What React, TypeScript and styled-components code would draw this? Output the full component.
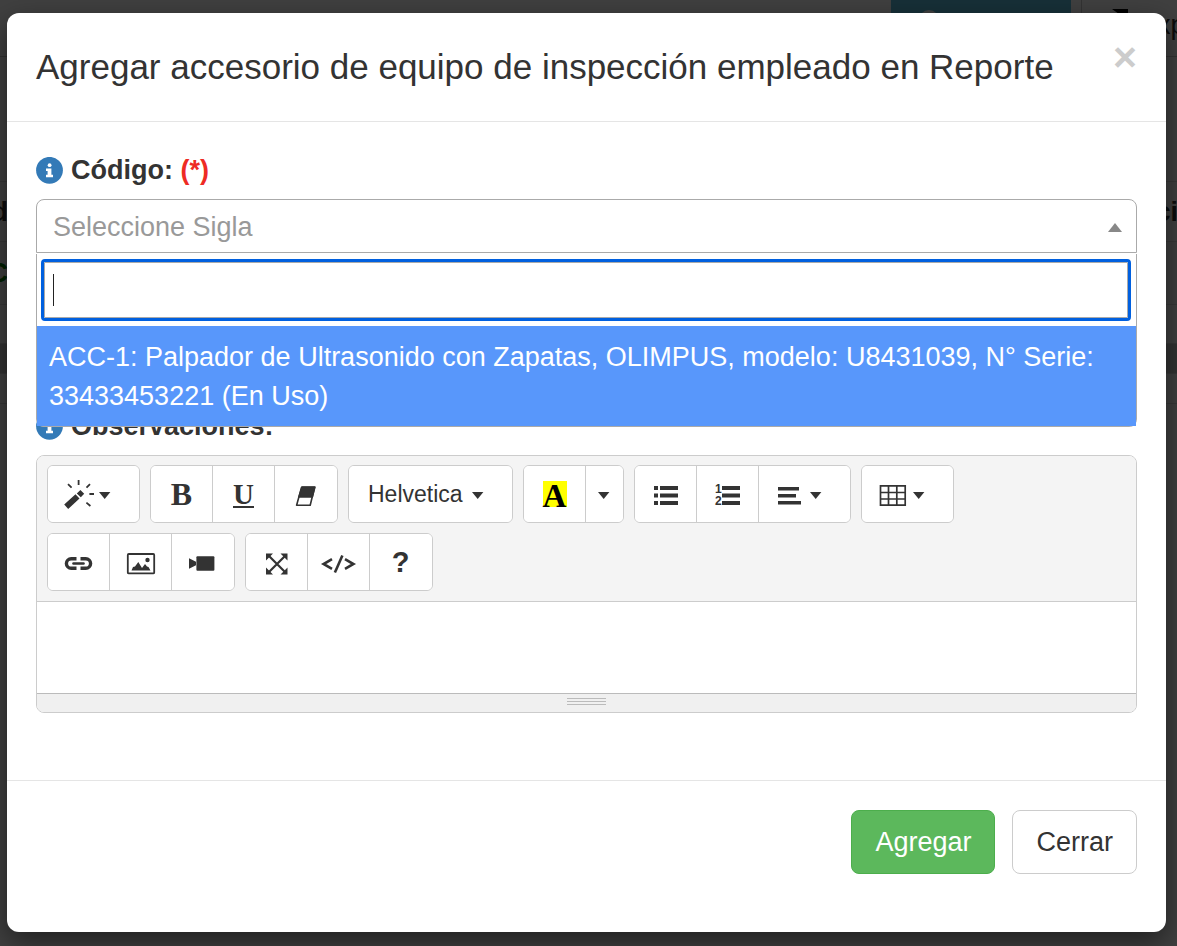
import React from "react";
import styled, { createGlobalStyle } from "styled-components";

const GlobalStyle = createGlobalStyle`
  * { box-sizing: border-box; }
  body {
    margin: 0;
    color: #333;
    font: 27px/38px "Liberation Sans", Arial, sans-serif;
  }
  button, input, textarea { font: inherit; color: inherit; }
`;

/* Page behind the dialog */

const Page = styled.div`
  position: relative;
  min-height: 100vh;
  overflow: hidden;
  background: #fff;
`;

const Behind = styled.div`
  position: absolute;
  inset: 0;
  overflow: hidden;
`;

const PageBar = styled.div`
  display: flex;
  justify-content: flex-end;
  height: 57px;
  border-bottom: 1px solid #ccc;
`;

const TealBlock = styled.div`
  width: 180px;
  margin-right: 10px;
  padding: 10px 28px;
  background: #5bc0de;
`;

const TealDot = styled.span`
  display: block;
  width: 20px;
  height: 20px;
  border-radius: 50%;
  background: #fff;
`;

const ExportBlock = styled.div`
  display: flex;
  align-items: center;
  gap: 10px;
  width: 96px;
  padding: 0 0 6px 30px;
  border-left: 1px solid #ccc;
  color: #333;
  white-space: nowrap;
  svg { flex: none; }
`;

const PageRow = styled.div<{ $height: number; $shade?: string }>`
  display: flex;
  align-items: center;
  justify-content: space-between;
  height: ${(p) => p.$height}px;
  border-bottom: 1px solid #ddd;
  background: ${(p) => p.$shade || "#fff"};
  font-weight: bold;
`;

const EdgeStart = styled.span<{ $color?: string }>`
  display: flex;
  justify-content: flex-end;
  width: 8px;
  color: ${(p) => p.$color || "#333"};
`;

const EdgeEnd = styled.span`
  width: 56px;
  overflow: hidden;
`;

/* Dialog */

const Backdrop = styled.div`
  position: relative;
  min-height: 100vh;
  padding: 13px 11px 14px 7px;
  background: rgba(0, 0, 0, 0.75);
`;

const Dialog = styled.section`
  background: #fff;
  border-radius: 12px;
  box-shadow: 0 10px 29px rgba(0, 0, 0, 0.5);
`;

const Header = styled.header`
  display: flex;
  justify-content: space-between;
  align-items: flex-start;
  padding: 29px;
  border-bottom: 1px solid #e5e5e5;
`;

const Title = styled.h4`
  margin: 0;
  font-size: 35px;
  line-height: 50px;
  font-weight: normal;
`;

const Close = styled.button`
  padding: 0;
  border: 0;
  background: none;
  color: #ccc;
  font-size: 41px;
  line-height: 30px;
  font-weight: bold;
`;

const Body = styled.div`
  padding: 29px;
`;

const Field = styled.div<{ $gap: number }>`
  margin-bottom: ${(p) => p.$gap}px;
`;

const Label = styled.label`
  display: flex;
  align-items: center;
  gap: 8px;
  margin-bottom: 10px;
  font-weight: bold;
`;

const Required = styled.span`
  color: #ee2b24;
`;

const Picker = styled.div`
  position: relative;
`;

const Selection = styled.button`
  display: flex;
  align-items: center;
  justify-content: space-between;
  width: 100%;
  height: 54px;
  padding: 2px 14px 0 16px;
  border: 1px solid #aaa;
  border-radius: 8px 8px 0 0;
  background: #fff;
  color: #999;
`;

const Dropdown = styled.div`
  position: absolute;
  z-index: 1;
  top: 100%;
  left: 0;
  right: 0;
  margin-top: 1px;
  border: 1px solid #aaa;
  border-top: 0;
  border-radius: 0 0 8px 8px;
  background: #fff;
`;

const SearchArea = styled.div`
  padding: 8px 8px 8px 7px;
`;

const SearchBox = styled.div`
  display: flex;
  align-items: center;
  height: 56px;
  padding: 0 8px;
  border: 1px solid #aaa;
  outline: 3px solid #0060df;
  border-radius: 1px;
`;

const TextCursor = styled.span`
  width: 1px;
  height: 32px;
  background: #222;
`;

const SearchInput = styled.input`
  flex: 1;
  min-width: 0;
  padding: 0;
  border: 0;
  outline: 0;
  background: none;
`;

const Options = styled.ul`
  margin: 0;
  padding: 0;
  list-style: none;
`;

const Option = styled.li`
  padding: 12px 12px 10px;
  background: #5897fb;
  color: #fff;
  line-height: 39px;
`;

/* Editor */

const Editor = styled.div`
  overflow: hidden;
  border: 1px solid #ccc;
  border-radius: 8px;
`;

const Toolbar = styled.div`
  display: flex;
  flex-wrap: wrap;
  gap: 10px;
  padding: 9px 10px 10px;
  border-bottom: 1px solid #ccc;
  background: #f4f4f4;
`;

const Group = styled.div`
  display: flex;
  height: 58px;
  overflow: hidden;
  border: 1px solid #ccc;
  border-radius: 6px;
  background: #fff;
`;

const kinds = {
  icon: { width: 62, start: 15 },
  menu: { width: 91, start: 16 },
  font: { width: 163, start: 19 },
  caret: { width: 37, start: 12 },
};

const Tool = styled.button<{ $kind?: keyof typeof kinds }>`
  display: flex;
  align-items: center;
  gap: ${(p) => (p.$kind === "font" ? 9 : 4)}px;
  width: ${(p) => kinds[p.$kind || "icon"].width}px;
  padding: 0 0 0 ${(p) => kinds[p.$kind || "icon"].start}px;
  border: 0;
  border-right: 1px solid #ccc;
  background: #fff;
  font-size: 23px;
  &:last-child { border-right: 0; }
`;

const Glyph = styled.span<{ $size: number; $sans?: boolean }>`
  width: 31px;
  text-align: center;
  font-family: ${(p) => (p.$sans ? '"Liberation Sans", sans-serif' : '"Liberation Serif", serif')};
  font-size: ${(p) => p.$size}px;
  line-height: 32px;
  font-weight: bold;
`;

const Underlined = styled.span`
  display: inline-block;
  height: 26px;
  border-bottom: 2px solid #333;
  line-height: 24px;
`;

const Marker = styled.span`
  display: block;
  width: 24px;
  height: 26px;
  margin: 0 auto;
  background: #ff0;
  color: #000;
  line-height: 30px;
`;

const EditArea = styled.textarea`
  display: block;
  width: 100%;
  height: 91px;
  padding: 10px;
  border: 0;
  outline: 0;
  resize: none;
`;

const StatusBar = styled.div`
  display: flex;
  flex-direction: column;
  align-items: center;
  gap: 2px;
  height: 19px;
  padding-top: 4px;
  border-top: 1px solid #bbb;
  background: #f0f0f0;
`;

const GripLine = styled.span`
  width: 39px;
  height: 1px;
  background: #bbb;
`;

const Footer = styled.footer`
  display: flex;
  justify-content: flex-end;
  gap: 17px;
  padding: 29px 29px 58px;
  border-top: 1px solid #e5e5e5;
`;

const Button = styled.button<{ $primary?: boolean }>`
  height: 64px;
  padding: 0 23px;
  border: 1px solid ${(p) => (p.$primary ? "#4cae4c" : "#ccc")};
  border-radius: 8px;
  background: ${(p) => (p.$primary ? "#5cb85c" : "#fff")};
  color: ${(p) => (p.$primary ? "#fff" : "#333")};
`;

const IconSvg = styled.svg`
  flex: none;
  overflow: visible;
  fill: #333;
`;

const Icon = ({ children }: { children: React.ReactNode }) => (
  <IconSvg width="31" height="30" viewBox="0 0 31 30" aria-hidden="true">
    {children}
  </IconSvg>
);

const Caret = () => (
  <IconSvg width="12" height="12" viewBox="0 0 12 12" aria-hidden="true">
    <path d="M0 4H11.4L5.7 11Z" />
  </IconSvg>
);

const Info = () => (
  <svg width="27" height="27" viewBox="0 0 27 27" aria-hidden="true">
    <circle cx="13.5" cy="13.3" r="13.4" fill="#337ab7" />
    <circle cx="13.6" cy="8.2" r="1.9" fill="#fff" />
    <path d="M10 11.6H15.4V17.8H17V20.2H10V17.8H11.6V14H10Z" fill="#fff" />
  </svg>
);

export default function App() {
  return (
    <Page>
      <GlobalStyle />
      <Behind aria-hidden="true">
        <PageBar>
          <TealBlock><TealDot /></TealBlock>
          <ExportBlock>
            <svg width="17" height="32" viewBox="0 0 17 32">
              <path d="M0 0H16V14L11 9L4 16L0 12L7 5Z" fill="#000" />
            </svg>
            Exportar
          </ExportBlock>
        </PageBar>
        <PageRow $height={125} />
        <PageRow $height={60}>
          <EdgeStart>d</EdgeStart>
          <EdgeEnd>Acción</EdgeEnd>
        </PageRow>
        <PageRow $height={63} $shade="#f9f9f9">
          <EdgeStart $color="#008000">C</EdgeStart>
        </PageRow>
        <PageRow $height={39} />
        <PageRow $height={30} $shade="#ccc" />
        <PageRow $height={30} />
      </Behind>
      <Backdrop>
        <Dialog role="dialog" aria-labelledby="dialog-title">
          <Header>
            <Title id="dialog-title">Agregar accesorio de equipo de inspección empleado en Reporte</Title>
            <Close type="button" aria-label="Cerrar ventana">×</Close>
          </Header>
          <Body>
            <Field $gap={154}>
              <Label htmlFor="codigo">
                <Info />
                <span>Código: <Required>(*)</Required></span>
              </Label>
              <Picker>
                <Selection type="button" id="codigo" aria-expanded="true">
                  Seleccione Sigla
                  <svg width="14" height="9" viewBox="0 0 14 9" aria-hidden="true">
                    <path d="M0 9L7 0L14 9Z" fill="#888" />
                  </svg>
                </Selection>
                <Dropdown>
                  <SearchArea>
                    <SearchBox>
                      <TextCursor />
                      <SearchInput type="text" aria-label="Buscar sigla" />
                    </SearchBox>
                  </SearchArea>
                  <Options role="listbox">
                    <Option role="option" aria-selected="true">
                      ACC-1: Palpador de Ultrasonido con Zapatas, OLIMPUS, modelo: U8431039, N° Serie: 33433453221 (En Uso)
                    </Option>
                  </Options>
                </Dropdown>
              </Picker>
            </Field>
            <Field $gap={38}>
              <Label htmlFor="observaciones">
                <Info />
                <span>Observaciones:</span>
              </Label>
              <Editor>
                <Toolbar>
                  <Group>
                    <Tool type="button" $kind="menu" aria-label="Estilo">
                      <Icon>
                        <path d="M0.2 25.5L11.5 15.2L15.5 19.4L4.2 30Z M12.8 14.4L16.4 11L20.2 14.7L16.8 18.3Z" />
                        <path d="M4 5.2L7.6 8.6M14.6 1V6M26 5.2L22.5 8.6M25.4 15H30M22.4 23.6L26.4 27" stroke="#333" strokeWidth="1.8" />
                      </Icon>
                      <Caret />
                    </Tool>
                  </Group>
                  <Group>
                    <Tool type="button" aria-label="Negrita"><Glyph $size={32}>B</Glyph></Tool>
                    <Tool type="button" aria-label="Subrayado"><Glyph $size={29}><Underlined>U</Underlined></Glyph></Tool>
                    <Tool type="button" aria-label="Borrar formato">
                      <Icon>
                        <path d="M11.6 8.3H24.6L20.2 26.2H6.6Z" fill="#fff" stroke="#333" strokeWidth="1.6" strokeLinejoin="round" />
                        <path d="M12 8H25L22.4 18H8.8Z" stroke="#333" strokeWidth="1.4" strokeLinejoin="round" />
                      </Icon>
                    </Tool>
                  </Group>
                  <Group>
                    <Tool type="button" $kind="font">Helvetica<Caret /></Tool>
                  </Group>
                  <Group>
                    <Tool type="button" aria-label="Color"><Glyph $size={33}><Marker>A</Marker></Glyph></Tool>
                    <Tool type="button" $kind="caret" aria-label="Más colores"><Caret /></Tool>
                  </Group>
                  <Group>
                    <Tool type="button" aria-label="Lista">
                      <Icon>
                        <path d="M4 7h4v4h-4zM4 14.6h4v4h-4zM4 22h4v4h-4zM10 7h18v4h-18zM10 14.6h18v4h-18zM10 22h18v4h-18z" />
                      </Icon>
                    </Tool>
                    <Tool type="button" aria-label="Lista numerada">
                      <Icon>
                        <path d="M10 7h18v4h-18zM10 14.6h18v4h-18zM10 22h18v4h-18z" />
                        <text x="3" y="14" fontSize="12" fontWeight="bold">1</text>
                        <text x="3" y="26" fontSize="12" fontWeight="bold">2</text>
                      </Icon>
                    </Tool>
                    <Tool type="button" $kind="menu" aria-label="Alinear">
                      <Icon>
                        <path d="M3 8h21v3.4h-21zM3 15h18v3.4h-18zM3 22h23v3.4h-23z" />
                      </Icon>
                      <Caret />
                    </Tool>
                  </Group>
                  <Group>
                    <Tool type="button" $kind="menu" aria-label="Tabla">
                      <Icon>
                        <path d="M2.5 6.8H27.2V26.2H2.5ZM10.5 6.5V26.5M18.8 6.5V26.5M2.5 13.5H27.5M2.5 20H27.5" fill="none" stroke="#333" strokeWidth="1.7" />
                      </Icon>
                      <Caret />
                    </Tool>
                  </Group>
                  <Group>
                    <Tool type="button" aria-label="Enlace">
                      <Icon>
                        <path d="M13.5 11.7H8.2A4.8 4.8 0 0 0 8.2 21.3H13.5M17.5 11.7H22.8A4.8 4.8 0 0 1 22.8 21.3H17.5" fill="none" stroke="#333" strokeWidth="3.4" />
                        <path d="M10.5 16.5H20.5" stroke="#333" strokeWidth="2.6" strokeLinecap="round" />
                      </Icon>
                    </Tool>
                    <Tool type="button" aria-label="Imagen">
                      <Icon>
                        <rect x="2.8" y="7" width="26.4" height="19.4" rx="1" fill="none" stroke="#333" strokeWidth="1.8" />
                        <path d="M6.5 23.5L8 20L10 19.5L13.3 15L17 21L20 17L22 19.5L23.5 20L25.5 23.5Z" />
                        <circle cx="22.5" cy="13" r="2.2" />
                      </Icon>
                    </Tool>
                    <Tool type="button" aria-label="Video">
                      <Icon>
                        <path d="M2 11.2L9 14.8V18.2L2 21.8Z" />
                        <rect x="9.4" y="9.2" width="18" height="14.6" rx="1" />
                      </Icon>
                    </Tool>
                  </Group>
                  <Group>
                    <Tool type="button" aria-label="Pantalla completa">
                      <Icon>
                        <path d="M8 9L24 25M24 9L8 25" stroke="#333" strokeWidth="2.2" />
                        <path d="M5 6.5H12L5 13.5ZM26.5 6.5H19.5L26.5 13.5ZM5 27.5H12L5 20.5ZM26.5 27.5H19.5L26.5 20.5Z" />
                      </Icon>
                    </Tool>
                    <Tool type="button" aria-label="Ver código">
                      <Icon>
                        <path d="M9 12.2L0.6 17L9 21.8M22 12.2L30.4 17L22 21.8" fill="none" stroke="#333" strokeWidth="2.6" />
                        <path d="M19.4 8.5L11.9 25.5" stroke="#333" strokeWidth="2.6" />
                      </Icon>
                    </Tool>
                    <Tool type="button" aria-label="Ayuda"><Glyph $size={29} $sans>?</Glyph></Tool>
                  </Group>
                </Toolbar>
                <EditArea id="observaciones" />
                <StatusBar>
                  <GripLine />
                  <GripLine />
                  <GripLine />
                </StatusBar>
              </Editor>
            </Field>
          </Body>
          <Footer>
            <Button type="button" $primary>Agregar</Button>
            <Button type="button">Cerrar</Button>
          </Footer>
        </Dialog>
      </Backdrop>
    </Page>
  );
}
